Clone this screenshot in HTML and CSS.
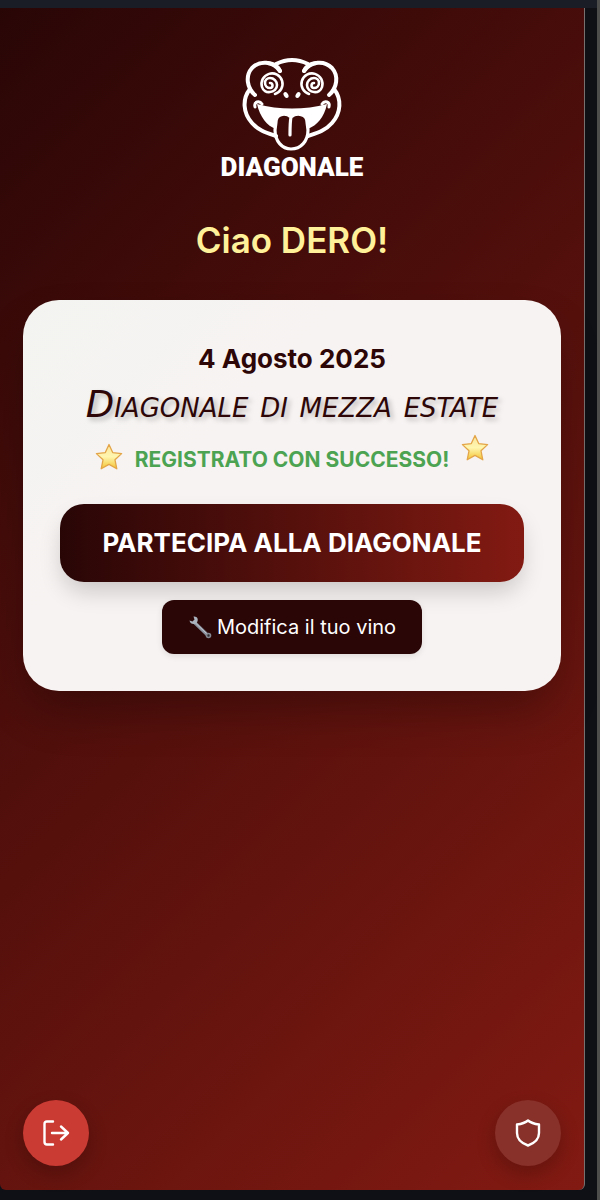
FILE: index.html
```html
<!DOCTYPE html>
<html lang="it">
<head>
<meta charset="utf-8">
<meta name="viewport" content="width=device-width, initial-scale=1">
<title>Diagonale</title>
<link rel="stylesheet" href="styles.css">
</head>
<body>
<svg width="0" height="0" class="defs" aria-hidden="true">
  <defs>
    <linearGradient id="gold" x1="0" y1="0" x2="0" y2="1">
      <stop offset="0" stop-color="#fbe59b"/>
      <stop offset=".5" stop-color="#fff6b0"/>
      <stop offset="1" stop-color="#f3c431"/>
    </linearGradient>
    <symbol id="star" viewBox="0 0 28 28">
      <path d="M14 1.500 L17.700 9.600 L26.600 10.600 L20 16.800 L21.800 25.800 L14 21.400 L6.200 25.800 L8 16.800 L1.400 10.600 L10.300 9.600 Z" fill="url(#gold)" stroke="#e3a548" stroke-width="1.300" stroke-linejoin="round"/>
    </symbol>
  </defs>
</svg>
<div class="screen">
  <main class="content">
    <div class="logo">
      <svg class="frog" viewBox="0 0 100 94" role="img" aria-label="Rana Diagonale" fill="none" stroke="#fff" stroke-width="4" stroke-linecap="round" stroke-linejoin="round">
        <path d="M34 8 Q50 0 66 8"/>
        <g id="side">
          <path d="M38 15 C31 5 18 4 10 12 C3 20 5 32 13 39"/>
          <path d="M26 7 Q35 8 38 15"/>
          <path d="M8 33 C0 43 1 57 10 67 C17 75 25 77 34 80"/>
          <path d="M28 27 A2.500 2.500 0 0 1 28 32 A5 5 0 0 1 28 22 A7 7 0 0 1 28 36 M28 36 A7 7 0 0 1 20 31 A10.500 10.500 0 1 1 33 38" stroke-width="2.600"/>
          <ellipse cx="44" cy="39" rx="2.200" ry="3.200" transform="rotate(-30 44 39)" fill="#fff" stroke="none"/>
          <path d="M13 51 Q12 47 15 46 Q18 45 20 48" stroke-width="3"/>
        </g>
        <use href="#side" transform="translate(100 0) scale(-1 1)"/>
        <path d="M15 48 C37 54 63 54 85 48 C82 62 75 69 66 73 L66 64 C64 57 55 56 49 61 C44 56 35 57 34 65 L34 73 C25 70 18 61 15 48 Z" fill="#fff" stroke="none"/>
        <path d="M49 61 C43 56 34 58 34 66 L33 74 C33 85 40 93 49 93 C59 93 66 85 66 74 L65 66 C65 58 55 56 49 61 C48 66 48 73 48 79" stroke-width="3.200"/>
      </svg>
      <span class="wordmark">DIAGONALE</span>
    </div>
    <h1 class="greeting">Ciao DERO!</h1>
    <section class="card">
      <h2 class="date">4 Agosto 2025</h2>
      <p class="event">Diagonale di mezza estate</p>
      <p class="status">
        <svg class="star" aria-hidden="true"><use href="#star"/></svg>
        <span>REGISTRATO CON SUCCESSO!</span>
        <svg class="star star-high" aria-hidden="true"><use href="#star"/></svg>
      </p>
      <button class="join" type="button">PARTECIPA ALLA DIAGONALE</button>
      <button class="edit" type="button">
        <svg class="wrench" viewBox="0 0 24 24" aria-hidden="true">
          <path d="M6 7 L19.500 20" stroke="#8b929d" stroke-width="3.200"/>
          <path d="M7 7.500 L19 19" stroke="#c2c9d2" stroke-width="1"/>
          <path d="M5.500 1.500 C9 1 11 4 9 7.500 C6.500 10.500 2 9 1.500 5.500 L4.500 6.500 L6.500 4.500 Z" fill="#abb3be"/>
          <circle cx="20.500" cy="20.500" r="2" fill="#302e33" stroke="#858790" stroke-width="1.600"/>
        </svg>
        <span>Modifica il tuo vino</span>
      </button>
    </section>
  </main>
  <footer class="actions">
    <button class="round logout" type="button" aria-label="Esci">
      <svg class="icon" viewBox="0 0 28 28" aria-hidden="true"><path d="M11 2.500 H5 Q2.500 2.500 2.500 5 V23 Q2.500 25.500 5 25.500 H11 M10 14 H26 M19 7.500 L26 14 L19 20.500"/></svg>
    </button>
    <button class="round shield" type="button" aria-label="Amministrazione">
      <svg class="icon" viewBox="0 0 28 28" aria-hidden="true"><path d="M14 1.500 C11 4 7 5 3 5.500 V14 C3 20 7 24 14 26.500 C21 24 25 20 25 14 V5.500 C21 5 17 4 14 1.500 Z"/></svg>
    </button>
  </footer>
</div>
</body>
</html>
```
FILE: styles.css
```css
* {
  box-sizing: border-box;
}

body {
  margin: 0;
  min-height: 100vh;
  display: flex;
  padding: 8px 12px 10px 0;
  background: linear-gradient(#1a1d26, #1a1d26) top / 100% 8px no-repeat, #0f1015;
  border-right: 3px solid #4d4d4b;
  font-family: Inter, "Liberation Sans", sans-serif;
}

.defs {
  position: absolute;
}

.screen {
  flex: 1;
  display: flex;
  flex-direction: column;
  justify-content: space-between;
  padding: 48px 23px 24px;
  border-right: 1px solid #77706f;
  border-radius: 0 0 6px 6px;
  background: linear-gradient(135deg, #290606, #821a12);
}

.content {
  display: flex;
  flex-direction: column;
  align-items: center;
}

.logo {
  display: flex;
  flex-direction: column;
  align-items: center;
  color: #fff;
}

.frog {
  width: 100px;
  height: 94px;
  overflow: visible;
}

.wordmark {
  font: 900 26px/34px Roboto, "Liberation Sans", sans-serif;
}

.greeting {
  margin: 34px 0 38px;
  color: #fff09a;
  font-size: 35px;
  font-weight: 600;
  line-height: 44px;
}

.card {
  width: 100%;
  display: flex;
  flex-direction: column;
  align-items: center;
  padding: 41px 37px 37px;
  border-radius: 36px;
  background: linear-gradient(135deg, #f3f4f1, #f7f3f2 35%, #f7f3f2);
  box-shadow: 0 24px 48px -8px rgba(0, 0, 0, 0.3);
}

.date {
  margin: 0;
  color: #2d0708;
  font-size: 26px;
  font-weight: 700;
  line-height: 36px;
}

.event {
  margin: 8px 0 0;
  color: #2d0708;
  font: italic small-caps 37px/40px "Rock Salt", "DejaVu Sans", cursive;
  text-shadow: 3px 3px 5px rgba(0, 0, 0, 0.25);
}

.status {
  display: flex;
  align-items: center;
  gap: 12px;
  margin: 9px 0 0;
  color: #4ca351;
  font-size: 21px;
  font-weight: 700;
  line-height: 36px;
}

.star {
  width: 28px;
  height: 28px;
  margin-bottom: 6px;
}

.star-high {
  margin-bottom: 24px;
}

.join {
  width: 100%;
  margin-top: 18px;
  padding: 20px 16px;
  border: 0;
  border-radius: 24px;
  background: linear-gradient(90deg, #290606, #821a12);
  box-shadow: 0 12px 24px -4px rgba(0, 0, 0, 0.2);
  color: #fff;
  font: 700 26px/38px Inter, sans-serif;
}

.edit {
  display: flex;
  align-items: center;
  gap: 5px;
  margin-top: 18px;
  padding: 12px 26px;
  border: 0;
  border-radius: 12px;
  background: #2a0607;
  box-shadow: 0 2px 6px rgba(0, 0, 0, 0.1);
  color: #fff;
  font: 400 20px/30px Inter, sans-serif;
}

.wrench {
  width: 24px;
  height: 24px;
}

.actions {
  display: flex;
  justify-content: space-between;
}

.round {
  display: grid;
  place-items: center;
  width: 66px;
  height: 66px;
  padding: 0;
  border: 0;
  border-radius: 50%;
  box-shadow: 0 8px 20px rgba(0, 0, 0, 0.2);
}

.logout {
  background: #ca3b34;
}

.shield {
  background: #88302a;
}

.icon {
  width: 28px;
  height: 28px;
  fill: none;
  stroke: #fff;
  stroke-width: 2.4;
  stroke-linecap: round;
  stroke-linejoin: round;
}
```
